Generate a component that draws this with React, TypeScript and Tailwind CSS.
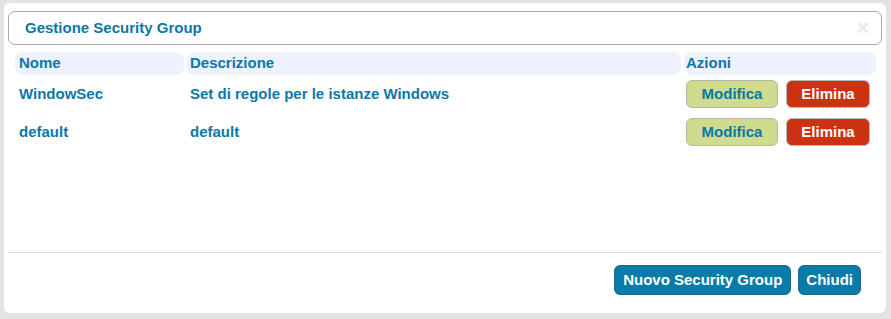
import React from "react";

const rows = [
  { nome: "WindowSec", desc: "Set di regole per le istanze Windows" },
  { nome: "default", desc: "default" },
];

export default function App() {
  return (
    <div
      className="w-[891px] h-[319px] bg-[#e3e3e3] pt-[3px] pl-[4px] overflow-hidden"
      style={{ fontFamily: '"Liberation Sans", Arial, sans-serif' }}
    >
      <div className="w-[882px] h-[310px] bg-white rounded-[6px] flex flex-col px-[4px] pt-[8px]">
        <div className="h-[34px] w-[874px] border border-[#a8a8a8] rounded-[7px] flex items-center justify-between pl-[16px] pr-[12px]">
          <span className="text-[15px] font-bold text-[#0b78a7]">Gestione Security Group</span>
          <span className="text-[22px] font-bold text-[#e3ebf3] leading-none">×</span>
        </div>
        <div className="flex flex-col pl-[7px] mt-[7px]">
          <div className="flex gap-[3px] h-[23px]">
            <div className="w-[169px] bg-[#edf2fd] rounded-[8px] flex items-center pl-[4px] text-[15px] font-bold text-[#0b78a7]">Nome</div>
            <div className="w-[494px] bg-[#edf2fd] rounded-[8px] flex items-center pl-[3px] text-[15px] font-bold text-[#0b78a7]">Descrizione</div>
            <div className="w-[192px] bg-[#edf2fd] rounded-[8px] flex items-center pl-[2px] text-[15px] font-bold text-[#0b78a7]">Azioni</div>
          </div>
          {rows.map((r) => (
            <div key={r.nome} className="flex gap-[3px] h-[38px] items-start pt-[5px]">
              <div className="w-[169px] h-[28px] flex items-center pl-[4px] text-[15px] font-bold text-[#0b78a7]">{r.nome}</div>
              <div className="w-[494px] h-[28px] flex items-center pl-[3px] text-[15px] font-bold text-[#0b78a7]">{r.desc}</div>
              <div className="w-[192px] flex gap-[8px] pl-[2px]">
                <button className="w-[92px] h-[28px] rounded-[6px] border border-[#b4b4a4] bg-[#cfdb8e] text-[15px] font-bold text-[#0b78a7]">Modifica</button>
                <button className="w-[84px] h-[28px] rounded-[6px] border border-[#b9b9b9] bg-[#cb3212] text-[15px] font-bold text-white">Elimina</button>
              </div>
            </div>
          ))}
        </div>
        <div className="mt-auto border-t border-[#dedede] h-[61px] flex items-start justify-end gap-[7px] pt-[12px] pr-[21px]">
          <button className="h-[30px] px-[8px] rounded-[6px] border border-[#1f6a89] bg-[#077ca8] text-[15px] font-bold text-white">Nuovo Security Group</button>
          <button className="h-[30px] px-[7px] rounded-[6px] border border-[#1f6a89] bg-[#077ca8] text-[15px] font-bold text-white">Chiudi</button>
        </div>
      </div>
    </div>
  );
}
